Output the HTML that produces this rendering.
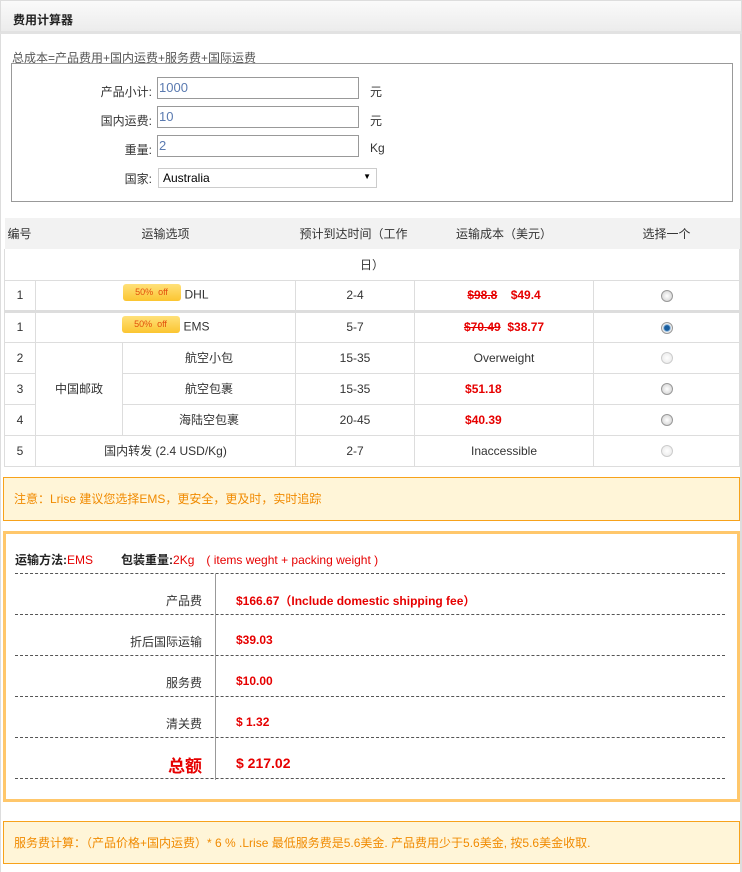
<!DOCTYPE html>
<html><head><meta charset="utf-8"><style>
*{margin:0;padding:0;box-sizing:border-box}
body{width:742px;height:872px;background:#fff;font-family:"Liberation Sans","Noto Sans CJK SC",sans-serif;font-size:12px;color:#333;position:relative;overflow:hidden}
.a{position:absolute}
.hdr{left:0;top:0;width:742px;height:34px;background:linear-gradient(#fafafa,#ececec);border:1px solid #ddd;border-bottom:3px solid #e2e2e2}
.hdr b{position:absolute;left:12px;top:10px;font-size:12px;color:#222}
.frame{left:0;top:34px;width:742px;height:838px;border-left:1px solid #ddd;border-right:2px solid #ddd}
.inp{position:absolute;border:1px solid #999;height:22px;width:202px;left:157px;color:#5a7ab0;font-size:13px;padding:2px 1px;line-height:16px}
.lbl{position:absolute;width:150px;text-align:right;font-size:12px;color:#333}
table{border-collapse:collapse;position:absolute;left:4px;top:218px;width:735px;table-layout:fixed}
td{border:1px solid #ddd;text-align:center;height:31px;font-size:12px;color:#333;white-space:nowrap;overflow:visible}
.red{color:#e60000;font-weight:bold}
s.red{text-decoration:line-through}
.tag{display:inline-block;width:58px;height:17px;background:linear-gradient(#ffe17a,#fbc531);border-radius:3px;color:#e24f0b;font-size:9px;line-height:16px;vertical-align:middle;margin-right:4px;position:relative;top:-3px}
.rad{display:inline-block;width:12px;height:12px;border-radius:50%;border:1px solid #999;background:radial-gradient(#fff,#ccc);vertical-align:middle}
.rad.on{background:radial-gradient(#1a5e9e 35%,#7fb0db 45%,#eee 60%)}
.rad.dis{border-color:#ccc;background:radial-gradient(#fff,#e6e6e6)}
.note{left:3px;width:737px;background:#fff5d8;border:1px solid #f7a21b;color:#f08a00;font-size:12px;padding-left:10px}
.sum{left:3px;top:531px;width:737px;height:271px;border:3px solid #ffc76b}
.row{position:absolute;left:9px;width:710px;height:41px;border-top:1px dashed #555}
.row .l{position:absolute;left:0;width:187px;text-align:right;top:18px;font-size:12px}
.row .r{position:absolute;left:221px;top:18px;font-size:12px}
</style></head><body>
<div class="a frame"></div>
<div class="a hdr"><b>费用计算器</b></div>
<div class="a" style="left:12px;top:49px;color:#555;font-size:12px">总成本=产品费用+国内运费+服务费+国际运费</div>
<div class="a" style="left:11px;top:63px;width:722px;height:139px;border:1px solid #999">
<div class="lbl" style="left:-10px;top:19px">产品小计:</div><div class="inp" style="left:145px;top:13px">1000</div><div class="a" style="left:358px;top:19px">元</div>
<div class="lbl" style="left:-10px;top:48px">国内运费:</div><div class="inp" style="left:145px;top:42px">10</div><div class="a" style="left:358px;top:48px">元</div>
<div class="lbl" style="left:-10px;top:77px">重量:</div><div class="inp" style="left:145px;top:71px">2</div><div class="a" style="left:358px;top:77px">Kg</div>
<div class="lbl" style="left:-10px;top:106px">国家:</div>
<div class="a" style="left:146px;top:104px;width:219px;height:20px;border:1px solid #ccc;font-size:12px;color:#000;padding:2px 4px">Australia<span style="position:absolute;right:5px;top:3px;font-size:8px">▼</span></div>
</div>
<table>
<colgroup><col style="width:31px"><col style="width:87px"><col style="width:173px"><col style="width:119px"><col style="width:179px"><col style="width:146px"></colgroup>
<tr style="background:#f2f2f2"><td style="border:none;text-align:left;padding-left:3px">编号</td><td colspan="2" style="border:none">运输选项</td><td style="border:none;text-align:left;padding-left:4px">预计到达时间（工作</td><td style="border:none">运输成本（美元）</td><td style="border:none">选择一个</td></tr>
<tr><td colspan="6" style="border-top:none;text-align:center">日）</td></tr>
<tr><td>1</td><td colspan="2"><span class="tag">50%&nbsp; off</span>DHL</td><td>2-4</td><td><s class="red">$98.8</s>&nbsp;&nbsp;&nbsp; <span class="red">$49.4</span></td><td><span class="rad"></span></td></tr>
<tr style="border-top:3px solid #ddd"><td>1</td><td colspan="2"><span class="tag">50%&nbsp; off</span>EMS</td><td>5-7</td><td><s class="red">$70.49</s>&nbsp; <span class="red">$38.77</span></td><td><span class="rad on"></span></td></tr>
<tr><td>2</td><td rowspan="3">中国邮政</td><td>航空小包</td><td>15-35</td><td>Overweight</td><td><span class="rad dis"></span></td></tr>
<tr><td>3</td><td>航空包裹</td><td>15-35</td><td style="text-align:left;padding-left:50px"><span class="red">$51.18</span></td><td><span class="rad"></span></td></tr>
<tr><td>4</td><td>海陆空包裹</td><td>20-45</td><td style="text-align:left;padding-left:50px"><span class="red">$40.39</span></td><td><span class="rad"></span></td></tr>
<tr><td>5</td><td colspan="2">国内转发 (2.4 USD/Kg)</td><td>2-7</td><td>Inaccessible</td><td><span class="rad dis"></span></td></tr>
</table>
<div class="a note" style="top:477px;height:44px;line-height:42px">注意：Lrise 建议您选择EMS，更安全，更及时，实时追踪</div>
<div class="a sum">
<div class="a" style="left:9px;top:17px;font-size:12px"><b style="color:#222">运输方法:</b><span style="color:#e60000">EMS</span><b style="color:#222;margin-left:28px">包装重量:</b><span style="color:#e60000">2Kg</span><span style="color:#e60000;margin-left:12px">( items weght + packing weight )</span></div>
<div class="row" style="top:39px"><div class="l">产品费</div><div class="r red">$166.67（Include domestic shipping fee）</div></div>
<div class="row" style="top:80px"><div class="l">折后国际运输</div><div class="r red">$39.03</div></div>
<div class="row" style="top:121px"><div class="l">服务费</div><div class="r red">$10.00</div></div>
<div class="row" style="top:162px"><div class="l">清关费</div><div class="r red">$ 1.32</div></div>
<div class="row" style="top:203px;height:42px;border-bottom:1px dashed #555"><div class="l" style="top:14px;font-size:17px;color:#e60000;font-weight:bold">总额</div><div class="r red" style="font-size:14px;top:17px">$ 217.02</div></div>
<div class="a" style="left:209px;top:40px;width:1px;height:206px;background:#999"></div>
</div>
<div class="a note" style="top:821px;height:43px;line-height:42px">服务费计算：（产品价格+国内运费）* 6 % .Lrise 最低服务费是5.6美金. 产品费用少于5.6美金, 按5.6美金收取.</div>
</body></html>
